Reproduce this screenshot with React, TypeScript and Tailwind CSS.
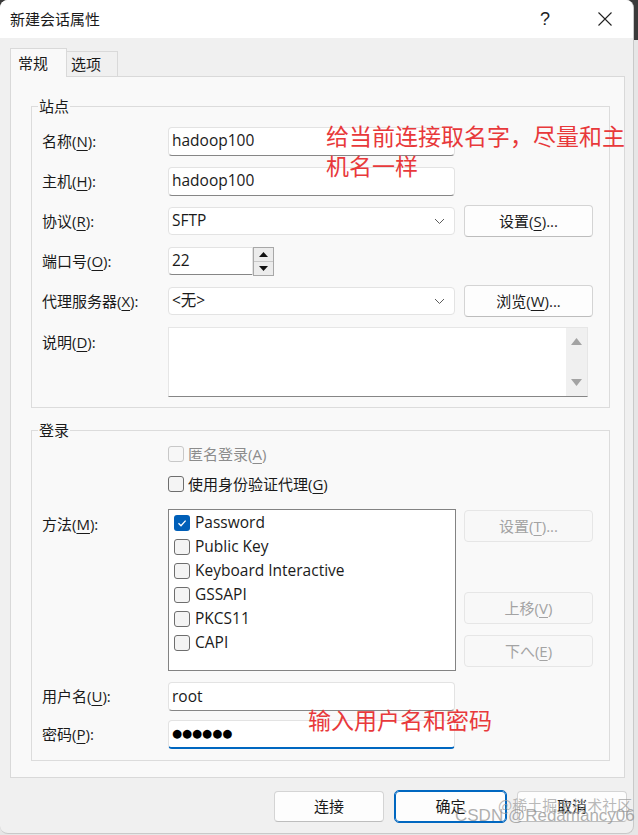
import React from "react";

const U = ({ c }: { c: string }) => (
  <span className="underline underline-offset-[3px] decoration-1">{c}</span>
);

const Chevron = () => (
  <svg width="11" height="7" viewBox="0 0 11 7" className="shrink-0">
    <path d="M1 1 L5.5 5.5 L10 1" fill="none" stroke="#5c5c5c" strokeWidth="1" />
  </svg>
);

const Check = ({ checked = false, disabled = false }: { checked?: boolean; disabled?: boolean }) =>
  checked ? (
    <span className="w-[16px] h-[16px] rounded-[3px] bg-[#005fb8] flex items-center justify-center shrink-0">
      <svg width="12" height="12" viewBox="0 0 12 12">
        <path d="M2.5 6.3 L5 8.7 L9.6 3.6" fill="none" stroke="white" strokeWidth="1.3" />
      </svg>
    </span>
  ) : (
    <span
      className={
        disabled
          ? "w-[16px] h-[16px] rounded-[3px] border border-[#c8c8c8] bg-[#f7f7f7] shrink-0"
          : "w-[16px] h-[16px] rounded-[3px] border border-[#6e6e6e] bg-[#f4f4f4] shrink-0"
      }
    />
  );

const Btn = ({ children, disabled = false, focus = false, w = "w-[129px]", h = "h-[32px]" }: { children: React.ReactNode; disabled?: boolean; focus?: boolean; w?: string; h?: string }) => (
  <div
    className={
      (disabled
        ? "border border-[#e6e6e6] bg-[#f8f8f8] text-[#a3a3a3] "
        : focus
        ? "border border-[#0067c0] outline outline-1 outline-[#0067c0] bg-[#fdfdfd] text-[#1a1a1a] "
        : "border border-[#d4d4d4] border-b-[#bdbdbd] bg-[#fdfdfd] text-[#1a1a1a] ") +
      w + " " + h +
      " rounded-[4px] flex items-center justify-center text-[15px] shrink-0"
    }
  >
    {children}
  </div>
);

const inputCls =
  "bg-white border border-[#e3e3e3] border-b-[#868686] rounded-[4px] flex items-center pl-[3px] text-[15.5px] text-[#1a1a1a]";

export default function App() {
  return (
    <div className="w-[638px] h-[835px] bg-[linear-gradient(to_bottom,#3a3a3a_0px,#3a3a3a_40px,#e6e6e6_40px)] font-['Open_Sans','Noto_Sans_CJK_SC',sans-serif] text-[#1a1a1a] relative overflow-hidden">
      <div className="w-[634px] h-[834px] rounded-[8px] overflow-hidden bg-[#f0f0f0] border-r border-b border-[#c9c9c9] flex flex-col">
        {/* title bar */}
        <div className="h-[38px] bg-white flex items-center shrink-0">
          <span className="ml-[10px] text-[15px] font-['Noto_Sans_CJK_SC',sans-serif]">新建会话属性</span>
          <span className="ml-auto mr-[48px] text-[18px] font-['Liberation_Sans',sans-serif] font-light text-[#222]">?</span>
          <svg width="14" height="14" viewBox="0 0 14 14" className="mr-[21px]">
            <path d="M0.5 0.5 L13.5 13.5 M13.5 0.5 L0.5 13.5" stroke="#222" strokeWidth="1.1" />
          </svg>
        </div>

        {/* tabs */}
        <div className="mt-[10px] ml-[10px] flex items-end h-[28px] shrink-0">
          <div className="relative z-10 w-[57px] h-[29px] -mb-[1px] bg-[#f9f9f9] border border-b-0 border-[#d9d9d9] flex items-center pl-[7px] text-[15px]">
            常规
          </div>
          <div className="w-[51px] h-[25px] bg-[#f0f0f0] border-t border-r border-[#d9d9d9] flex items-center pl-[4px] text-[15px]">
            选项
          </div>
        </div>

        {/* panel */}
        <div className="ml-[10px] w-[615px] h-[702px] bg-[#f9f9f9] border border-[#d9d9d9] shrink-0 pt-[19px]">
          {/* 站点 */}
          <fieldset className="ml-[20px] mr-[14px] border border-[#dcdcdc] pb-[10px]">
            <legend className="ml-[6px] px-[1px] text-[15px] leading-[20px]">站点</legend>
            <div className="mt-[5px] pl-[10px] flex flex-col">
              <div className="h-[40px] flex items-center">
                <span className="w-[126px] text-[15px]">名称(<U c="N" />):</span>
                <div className={inputCls + " w-[287px] h-[29px]"}>hadoop100</div>
              </div>
              <div className="h-[40px] flex items-center">
                <span className="w-[126px] text-[15px]">主机(<U c="H" />):</span>
                <div className={inputCls + " w-[287px] h-[29px]"}>hadoop100</div>
              </div>
              <div className="h-[40px] flex items-center">
                <span className="w-[126px] text-[15px]">协议(<U c="R" />):</span>
                <div className={inputCls + " w-[287px] h-[28px] border-b-[#e3e3e3] pr-[9px]"}>
                  <span>SFTP</span>
                  <span className="ml-auto"><Chevron /></span>
                </div>
                <div className="ml-[9px]">
                  <Btn>设置(<U c="S" />)...</Btn>
                </div>
              </div>
              <div className="h-[40px] flex items-center">
                <span className="w-[126px] text-[15px]">端口号(<U c="O" />):</span>
                <div className={inputCls + " w-[85px] h-[28px] rounded-r-none"}>22</div>
                <div className="w-[21px] h-[29px] border border-[#a8a8a8] bg-[#f0f0f0] flex flex-col">
                  <div className="flex-1 flex items-center justify-center border-b border-[#c8c8c8] bg-[#ececec]">
                    <svg width="9" height="5" viewBox="0 0 9 5"><path d="M0 5 L4.5 0 L9 5 Z" fill="#111" /></svg>
                  </div>
                  <div className="flex-1 flex items-center justify-center bg-[#ececec]">
                    <svg width="9" height="5" viewBox="0 0 9 5"><path d="M0 0 L4.5 5 L9 0 Z" fill="#111" /></svg>
                  </div>
                </div>
              </div>
              <div className="h-[40px] flex items-center">
                <span className="w-[126px] text-[15px]">代理服务器(<U c="X" />):</span>
                <div className={inputCls + " w-[287px] h-[28px] border-b-[#e3e3e3] pr-[9px]"}>
                  <span>&lt;无&gt;</span>
                  <span className="ml-auto"><Chevron /></span>
                </div>
                <div className="ml-[9px]">
                  <Btn>浏览(<U c="W" />)...</Btn>
                </div>
              </div>
              <div className="mt-[6px] flex items-start">
                <span className="w-[126px] text-[15px] pt-[4px]">说明(<U c="D" />):</span>
                <div className="w-[420px] h-[70px] bg-white border border-[#e6e6e6] border-b-[#868686] flex justify-end">
                  <div className="w-[21px] h-full bg-[#f0f0f0] flex flex-col items-center justify-between py-[10px]">
                    <svg width="11" height="7" viewBox="0 0 11 7"><path d="M0 7 L5.5 0 L11 7 Z" fill="#a3a3a3" /></svg>
                    <svg width="11" height="7" viewBox="0 0 11 7"><path d="M0 0 L5.5 7 L11 0 Z" fill="#a3a3a3" /></svg>
                  </div>
                </div>
              </div>
            </div>
          </fieldset>

          {/* 登录 */}
          <fieldset className="mt-[12px] ml-[20px] mr-[14px] border border-[#dcdcdc] pb-[11px]">
            <legend className="ml-[6px] px-[1px] text-[15px] leading-[20px]">登录</legend>
            <div className="pl-[10px] flex flex-col">
              <div className="mt-[2px] h-[24px] flex items-center pl-[126px] gap-[4px]">
                <Check disabled />
                <span className="text-[15px] text-[#8c8c8c]">匿名登录(<U c="A" />)</span>
              </div>
              <div className="mt-[6px] h-[24px] flex items-center pl-[126px] gap-[4px]">
                <Check />
                <span className="text-[15px]">使用身份验证代理(<U c="G" />)</span>
              </div>
              <div className="mt-[13px] flex items-start">
                <span className="w-[126px] text-[15px] pt-[4px]">方法(<U c="M" />):</span>
                <div className="w-[288px] h-[162px] bg-white border border-[#838383] pt-[1px] pl-[5px] flex flex-col">
                  {[
                    ["Password", true],
                    ["Public Key", false],
                    ["Keyboard Interactive", false],
                    ["GSSAPI", false],
                    ["PKCS11", false],
                    ["CAPI", false],
                  ].map(([t, c]) => (
                    <div key={t as string} className="h-[24px] flex items-center gap-[5px]">
                      <Check checked={c as boolean} />
                      <span className="text-[15.5px]">{t as string}</span>
                    </div>
                  ))}
                </div>
                <div className="ml-[8px] flex flex-col pt-[1px]">
                  <Btn disabled h="h-[32px]">设置(<U c="T" />)...</Btn>
                  <div className="mt-[50px]">
                    <Btn disabled>上移(<U c="V" />)</Btn>
                  </div>
                  <div className="mt-[11px]">
                    <Btn disabled>下へ(<U c="E" />)</Btn>
                  </div>
                </div>
              </div>
              <div className="mt-[11px] h-[29px] flex items-center">
                <span className="w-[126px] text-[15px]">用户名(<U c="U" />):</span>
                <div className={inputCls + " w-[287px] h-[29px]"}>root</div>
              </div>
              <div className="mt-[9px] h-[29px] flex items-center">
                <span className="w-[126px] text-[15px]">密码(<U c="P" />):</span>
                <div className="w-[287px] h-[29px] bg-white border border-[#e3e3e3] border-b-2 border-b-[#0067c0] rounded-[4px] flex items-center pl-[3px] text-[11.5px] tracking-[0px] font-['DejaVu_Sans',sans-serif] text-black">
                  ●●●●●●
                </div>
              </div>
            </div>
          </fieldset>
        </div>

        {/* bottom buttons */}
        <div className="mt-[13px] flex justify-end pr-[6px] gap-[11px]">
          <Btn w="w-[110px]" h="h-[31px]">连接</Btn>
          <Btn w="w-[111px]" h="h-[31px]" focus>确定</Btn>
          <Btn w="w-[110px]" h="h-[31px]">取消</Btn>
        </div>
      </div>

      {/* red annotations */}
      <div className="absolute left-[326px] top-[120px] text-[23px] leading-[30px] text-[#e8393b] font-['Noto_Sans_CJK_SC',sans-serif] w-[312px]">
        给当前连接取名字，尽量和主<br />机名一样
      </div>
      <div className="absolute left-[308px] top-[704px] text-[23px] leading-[30px] text-[#e8393b] font-['Noto_Sans_CJK_SC',sans-serif]">
        输入用户名和密码
      </div>

      {/* watermark */}
      <div className="absolute left-[498px] top-[795px] text-[15px] leading-[20px] text-[#9a9a9a]/70 font-['Noto_Sans_CJK_SC',sans-serif]">
        @稀土掘金技术社区
      </div>
      <div className="absolute left-[455px] top-[805px] text-[17px] leading-[22px] text-[#8c8c8c]/70 font-['Liberation_Sans',sans-serif]">
        CSDN @Redamancy06
      </div>
    </div>
  );
}
